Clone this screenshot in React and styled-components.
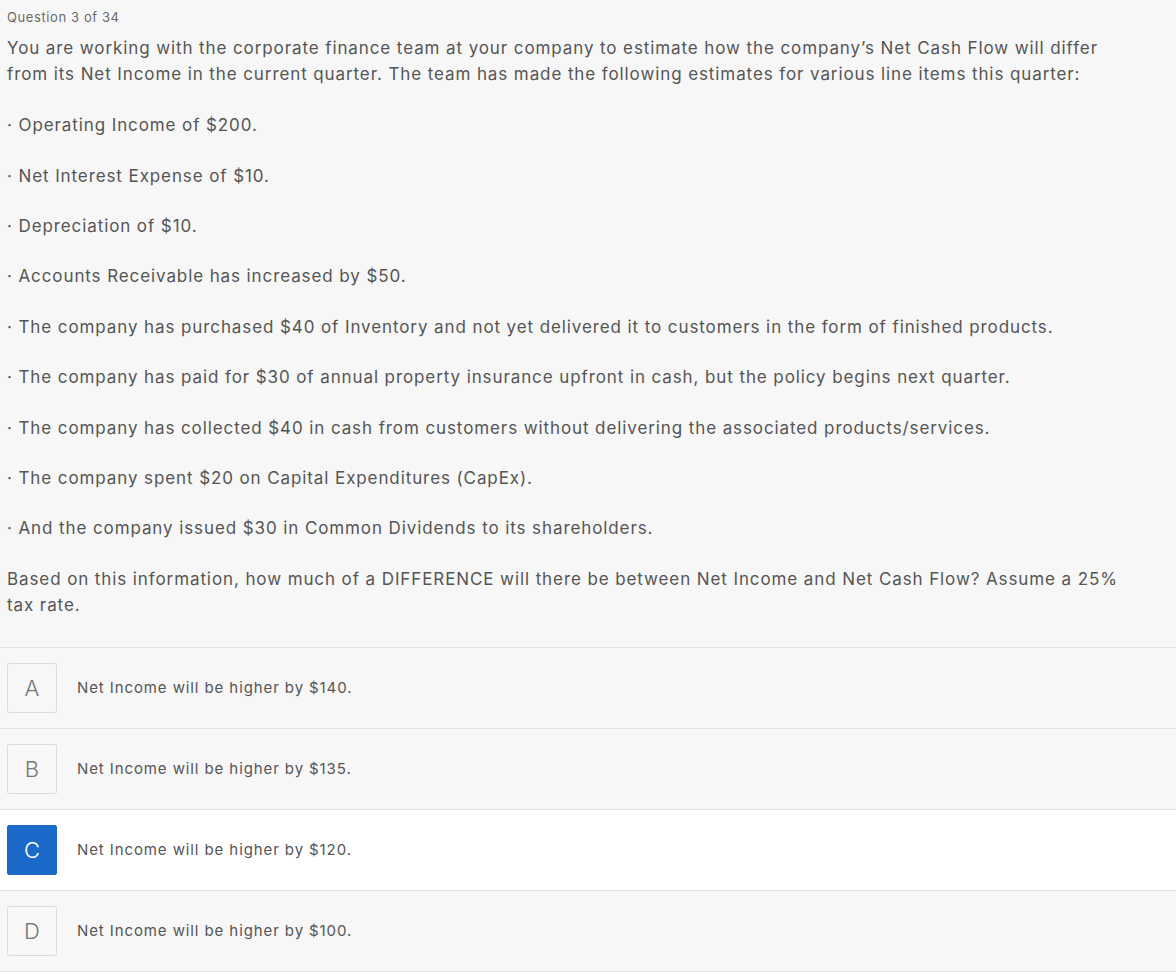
import styled, { createGlobalStyle } from "styled-components";

const bullets = [
    "Operating Income of $200.",
    "Net Interest Expense of $10.",
    "Depreciation of $10.",
    "Accounts Receivable has increased by $50.",
    "The company has purchased $40 of Inventory and not yet delivered it to customers in the form of finished products.",
    "The company has paid for $30 of annual property insurance upfront in cash, but the policy begins next quarter.",
    "The company has collected $40 in cash from customers without delivering the associated products/services.",
    "The company spent $20 on Capital Expenditures (CapEx).",
    "And the company issued $30 in Common Dividends to its shareholders.",
];

const options = [
    { letter: "A", text: "Net Income will be higher by $140." },
    { letter: "B", text: "Net Income will be higher by $135." },
    { letter: "C", text: "Net Income will be higher by $120.", selected: true },
    { letter: "D", text: "Net Income will be higher by $100." },
];

export default function App() {
    return (
        <>
            <GlobalStyle />
            <Page>
                <Question>
                    <Counter>Question 3 of 34</Counter>
                    <Para>
                        You are working with the corporate finance team at your company to
                        estimate how the company’s Net Cash Flow will differ from its Net
                        Income in the current quarter. The team has made the following
                        estimates for various line items this quarter:
                    </Para>
                    {bullets.map((b) => (
                        <Para key={b}>· {b}</Para>
                    ))}
                    <Para>
                        Based on this information, how much of a DIFFERENCE will there be
                        between Net Income and Net Cash Flow? Assume a 25% tax rate.
                    </Para>
                </Question>

                <OptionList>
                    {options.map((o) => (
                        <OptionRow key={o.letter} $selected={o.selected}>
                            <LetterBox $selected={o.selected}>{o.letter}</LetterBox>
                            <OptionText>{o.text}</OptionText>
                        </OptionRow>
                    ))}
                </OptionList>
            </Page>
        </>
    );
}

/* ================== STYLES ================== */

const GlobalStyle = createGlobalStyle`
    html, body {
        margin: 0;
        background: #f7f7f7;
    }
    body {
        font-family: Inter, "Open Sans", sans-serif;
        color: #555;
    }
`;

const Page = styled.div`
    width: 1176px;
    min-height: 972px;
    background: #f7f7f7;
`;

const Question = styled.div`
    padding: 8px 7px 29px 7px;
    border-bottom: 1px solid #e2e2e2;
`;

const Counter = styled.div`
    font-size: 13px;
    line-height: 18px;
    letter-spacing: 0.6px;
    color: #6b6b6b;
    margin-bottom: 9px;
`;

const Para = styled.p`
    max-width: 1125px;
    margin: 0 0 24.4px 0;
    font-size: 17px;
    line-height: 26px;
    letter-spacing: 0.9px;
    color: #555;

    &:first-of-type {
        margin-bottom: 25.2px;
    }

    &:last-child {
        margin-bottom: 0;
    }
`;

const OptionList = styled.div`
    display: flex;
    flex-direction: column;
`;

const OptionRow = styled.div`
    display: flex;
    align-items: center;
    gap: 20px;
    height: 80px;
    padding: 0 7px;
    background: ${({ $selected }) => ($selected ? "#fff" : "#f7f7f7")};
    border-bottom: 1px solid #e2e2e2;
`;

const LetterBox = styled.div`
    width: 50px;
    height: 50px;
    box-sizing: border-box;
    display: flex;
    align-items: center;
    justify-content: center;
    border-radius: 2px;
    border: 1px solid ${({ $selected }) => ($selected ? "#1b6ac9" : "#dcdcdc")};
    background: ${({ $selected }) => ($selected ? "#1b6ac9" : "#f7f7f7")};
    color: ${({ $selected }) => ($selected ? "#fff" : "#777")};
    font-size: 22px;
    font-weight: 300;
`;

const OptionText = styled.div`
    font-size: 15px;
    letter-spacing: 0.9px;
    color: #555;
`;
